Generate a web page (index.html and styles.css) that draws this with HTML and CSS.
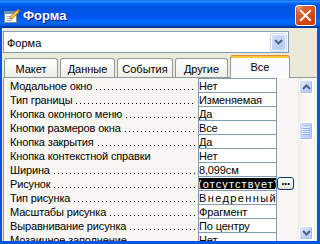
FILE: index.html
```html
<!DOCTYPE html>
<html>
<head>
<meta charset="utf-8">
<link rel="stylesheet" href="styles.css">
</head>
<body>
<div class="window">
  <div class="titlebar">
    <svg class="ticon" width="18" height="18" viewBox="0 0 18 18">
      <rect x="1.5" y="5.5" width="12" height="11" fill="#fff" stroke="#7b8794"/>
      <rect x="2" y="6" width="11" height="2" fill="#6f8fc9"/>
      <path d="M3.5 10.5h5M3.5 12.5h7M3.5 14.5h6" stroke="#a9b0b8"/>
      <path d="M7.5 10.5L14 4l2 2-6.5 6.5-2.6.6z" fill="#f5c542" stroke="#9a6d12" stroke-width=".7"/>
      <path d="M14 4l1-1 2 2-1 1z" fill="#e98a8a" stroke="#9a6d12" stroke-width=".5"/>
    </svg>
    <span class="title">Форма</span>
    <div class="close">
      <svg width="13" height="13" viewBox="0 0 13 13"><path d="M2 2L11 11M11 2L2 11" stroke="#fff" stroke-width="2" stroke-linecap="square"/></svg>
    </div>
  </div>
  <div class="client">
    <div class="combo">
      <span class="ctext">Форма</span>
      <div class="ddbtn"><svg width="9" height="6" viewBox="0 0 9 6"><path d="M1 1l3.5 3.5L8 1" fill="none" stroke="#4d6185" stroke-width="2"/></svg></div>
    </div>
    <div class="tabs">
      <div class="tab w1">Макет</div>
      <div class="tab w2">Данные</div>
      <div class="tab w3">События</div>
      <div class="tab w4">Другие</div>
      <div class="tab sel">Все</div>
    </div>
    <div class="panel">
      <div class="list">
        <div class="row"><div class="label"><span class="ltext">Модальное окно</span><span class="lead"></span></div><div class="val">Нет</div><div class="extra"></div></div>
        <div class="row"><div class="label"><span class="ltext">Тип границы</span><span class="lead"></span></div><div class="val">Изменяемая</div><div class="extra"></div></div>
        <div class="row"><div class="label"><span class="ltext">Кнопка оконного меню</span><span class="lead"></span></div><div class="val">Да</div><div class="extra"></div></div>
        <div class="row"><div class="label"><span class="ltext">Кнопки размеров окна</span><span class="lead"></span></div><div class="val">Все</div><div class="extra"></div></div>
        <div class="row"><div class="label"><span class="ltext">Кнопка закрытия</span><span class="lead"></span></div><div class="val">Да</div><div class="extra"></div></div>
        <div class="row"><div class="label"><span class="ltext">Кнопка контекстной справки</span></div><div class="val">Нет</div><div class="extra"></div></div>
        <div class="row"><div class="label"><span class="ltext">Ширина</span><span class="lead"></span></div><div class="val">8,099см</div><div class="extra"></div></div>
        <div class="row"><div class="label"><span class="ltext">Рисунок</span><span class="lead"></span></div><div class="val"><div class="selbox">(отсутствует)</div></div><div class="extra"><div class="build">...</div></div></div>
        <div class="row"><div class="label"><span class="ltext">Тип рисунка</span><span class="lead"></span></div><div class="val wide">Внедренный</div><div class="extra"></div></div>
        <div class="row"><div class="label"><span class="ltext">Масштабы рисунка</span><span class="lead"></span></div><div class="val">Фрагмент</div><div class="extra"></div></div>
        <div class="row"><div class="label"><span class="ltext">Выравнивание рисунка</span><span class="lead"></span></div><div class="val">По центру</div><div class="extra"></div></div>
        <div class="row"><div class="label"><span class="ltext">Мозаичное заполнение</span><span class="lead"></span></div><div class="val">Нет</div><div class="extra"></div></div>
      </div>
      <div class="scrollbar">
        <div class="sbtn"><svg width="9" height="6" viewBox="0 0 9 6"><path d="M1 5l3.5-3.5L8 5" fill="none" stroke="#4d6185" stroke-width="2"/></svg></div>
        <div class="track">
          <div class="thumb">
            <svg width="8" height="8" viewBox="0 0 8 8"><path d="M0 .5h7M0 2.5h7M0 4.5h7M0 6.5h7" stroke="#eef4fe"/><path d="M1 1.5h7M1 3.5h7M1 5.5h7M1 7.5h7" stroke="#8cb0f8"/></svg>
          </div>
        </div>
        <div class="sbtn"><svg width="9" height="6" viewBox="0 0 9 6"><path d="M1 1l3.5 3.5L8 1" fill="none" stroke="#4d6185" stroke-width="2"/></svg></div>
      </div>
    </div>
  </div>
</div>
</body>
</html>
```

FILE: styles.css
```css
* { box-sizing: border-box; }
html, body { margin: 0; padding: 0; }
body {
  width: 320px;
  height: 244px;
  overflow: hidden;
  font-family: "Liberation Sans", Arial, sans-serif;
  font-size: 11px;
  color: #000;
  background: #ece9d8;
}
.window {
  width: 320px;
  height: 244px;
  display: flex;
  flex-direction: column;
  background: #0753e2;
}
.titlebar {
  height: 28px;
  flex: none;
  display: flex;
  align-items: center;
  padding: 0 4px 0 3px;
  background: linear-gradient(to bottom, #0058ee 0%, #3593ff 4%, #288eff 6%, #127dff 8%, #036ffc 10%, #0262ee 14%, #0057e5 20%, #0054e3 24%, #0055eb 56%, #005bf5 66%, #026afe 76%, #0062ef 86%, #0052d6 92%, #0040ab 94%, #003092 100%);
}
.ticon { flex: none; margin-top: 2px; }
.title {
  flex: 1;
  margin-left: 2px;
  padding-top: 2px;
  color: #fff;
  font-family: "Liberation Sans", Arial, sans-serif;
  font-weight: bold;
  font-size: 13px;
  text-shadow: 1px 1px #0a1883;
}
.close {
  flex: none;
  width: 21px;
  height: 21px;
  margin-top: 2px;
  border: 1px solid #fff;
  border-radius: 3px;
  display: flex;
  align-items: center;
  justify-content: center;
  background: radial-gradient(circle at 90% 90%, #c23c00 0%, #d9521d 55%, #d86a3c 75%, #ffb89a 92%, #fff 100%);
  box-shadow: inset 0 -1px 2px 1px #d44400;
}
.client {
  flex: 1;
  margin: 0 3px 3px 2px;
  padding-left: 1px;
  background: #ece9d8;
  display: flex;
  flex-direction: column;
  overflow: hidden;
}
.combo {
  margin-top: 3px;
  width: 286px;
  height: 22px;
  flex: none;
  border: 1px solid #7f9db9;
  background: #fff;
  display: flex;
  align-items: center;
  padding: 0 2px 0 3px;
}
.ctext { flex: 1; padding-top: 1px; }
.ddbtn {
  width: 15px;
  height: 17px;
  border-radius: 2px;
  border: 1px solid #fff;
  background: linear-gradient(135deg, #d6e2fd 0%, #c1d3fb 50%, #b4c8f7 100%);
  box-shadow: 0 0 0 1px #c6d5f8;
  display: flex;
  align-items: center;
  justify-content: center;
}
.tabs {
  margin-top: 2px;
  height: 22px;
  flex: none;
  display: flex;
  align-items: flex-end;
  gap: 2px;
  padding-left: 1px;
  position: relative;
  z-index: 1;
}
.tab {
  height: 19px;
  border: 1px solid #919b9c;
  border-bottom: none;
  border-radius: 3px 3px 0 0;
  background: linear-gradient(to bottom, #fff 0%, #fafaf9 26%, #f0f0ea 95%, #ecebe6 100%);
  text-align: center;
  padding-top: 2px;
  line-height: 16px;
  white-space: nowrap;
}
.w1 { width: 54px; }
.w2 { width: 55px; }
.w3 { width: 56px; }
.w4 { width: 53px; }
.tab.sel {
  width: 60px;
  height: 23px;
  margin-bottom: -1px;
  background: #fcfcfe;
  border-top: 1px solid #e68b2c;
  box-shadow: inset 0 2px 0 #ffc83c;
  padding-top: 3px;
}
.panel {
  flex: 1;
  display: flex;
  border-top: 1px solid #919b9c;
  border-left: 1px solid #919b9c;
  border-right: 1px solid #f3f2ee;
  background: #f7f6f2;
  padding-right: 2px;
  overflow: hidden;
}
.list {
  width: 294px;
  flex: none;
}
.row {
  display: flex;
  height: 14px;
}
.label {
  width: 194px;
  flex: none;
  display: flex;
  padding-top: 2px;
  line-height: 13px;
  white-space: nowrap;
}
.ltext { padding-left: 6px; letter-spacing: -0.15px; }
.lead {
  flex: 1;
  margin: 0 2px 0 3px;
  height: 12px;
  background-image: linear-gradient(to right, #000 0 1px, transparent 1px 4px);
  background-size: 4px 1px;
  background-repeat: repeat-x;
  background-position: 1px 9px;
}
.val {
  width: 79px;
  height: 14px;
  flex: none;
  border: 1px solid #7f9db9;
  border-bottom: none;
  background: #fff;
  padding-top: 1px;
  line-height: 13px;
  white-space: nowrap;
  overflow: hidden;
  letter-spacing: -0.15px;
}
.val.wide { letter-spacing: 1.4px; }
.selbox {
  height: 11px;
  padding-top: 1px;
  line-height: 10px;
  background: #000;
  color: #fff;
  text-indent: -1px;
  letter-spacing: 1.1px;
  overflow: hidden;
}
.extra {
  width: 21px;
  flex: none;
}
.build {
  width: 17px;
  height: 13px;
  margin-top: 1px;
  border: 1px solid #003c74;
  border-radius: 3px;
  background: linear-gradient(to bottom, #fff, #f0f0ea 80%, #d6d0c5);
  font-weight: bold;
  font-size: 12px;
  line-height: 6px;
  text-align: center;
  letter-spacing: -0.5px;
}
.scrollbar {
  width: 16px;
  flex: none;
  display: flex;
  flex-direction: column;
  padding: 2px 0 1px;
  background: linear-gradient(to right, #eeede5, #f6f5f0 40%, #fbfaf7);
}
.sbtn {
  height: 14px;
  margin: 0 1px;
  flex: none;
  border: 1px solid #fff;
  border-radius: 2px;
  background: linear-gradient(135deg, #dde7fe 0%, #c4d5fb 50%, #b5c9f8 100%);
  box-shadow: inset -1px -1px 0 #a7bcec;
  display: flex;
  align-items: center;
  justify-content: center;
}
.track {
  flex: 1;
}
.thumb {
  margin: 28px 1px 0;
  height: 18px;
  border: 1px solid #fff;
  border-radius: 2px;
  background: linear-gradient(to right, #cad8fc, #c1d3fb 50%, #b8cbf8);
  box-shadow: inset -1px -1px 0 #a7bcec;
  display: flex;
  align-items: center;
  justify-content: center;
}
```
